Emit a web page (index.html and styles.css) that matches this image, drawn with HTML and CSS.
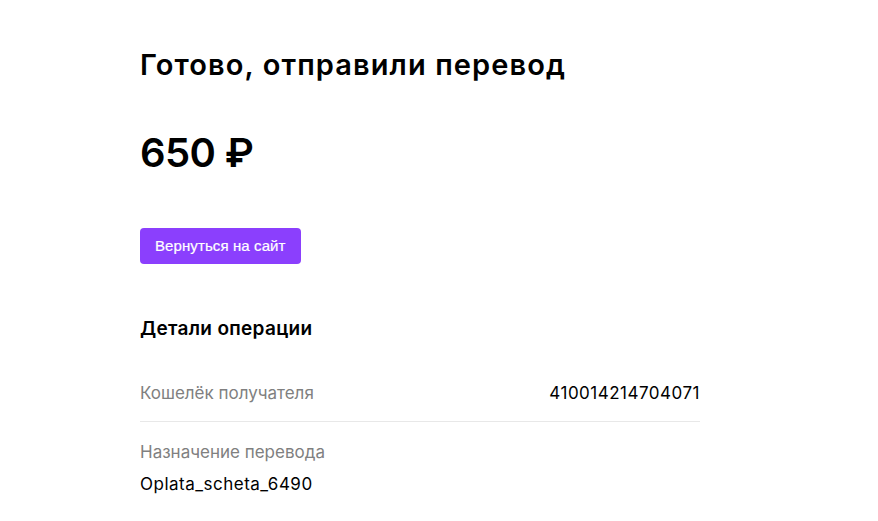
FILE: index.html
```html
<!DOCTYPE html>
<html lang="ru">
<head>
  <meta charset="utf-8">
  <title>Перевод отправлен</title>
  <link rel="stylesheet" href="styles.css">
</head>
<body>
  <div class="page">
    <h1 class="title">Готово, отправили перевод</h1>
    <p class="amount">650 ₽</p>
    <a class="back-btn" href="#">Вернуться на сайт</a>

    <h2 class="details-head">Детали операции</h2>
    <div class="row row-line">
      <span class="label">Кошелёк получателя</span>
      <span class="value">410014214704071</span>
    </div>
    <div class="row-stack">
      <span class="label">Назначение перевода</span>
      <span class="value">Oplata_scheta_6490</span>
    </div>
  </div>
</body>
</html>
```

FILE: styles.css
```css
body {
  margin: 0;
  background: #fff;
  font-family: Inter, "Noto Sans", sans-serif;
  color: #000;
}

.page {
  width: 560px;
  padding: 43px 0 0 140px;
}

.title {
  margin: 0;
  font-size: 29px;
  font-weight: 600;
  line-height: 44px;
  letter-spacing: 1.1px;
}

.amount {
  margin: 44px 0 0;
  font-size: 40px;
  font-weight: 600;
  line-height: 44px;
  letter-spacing: -0.6px;
}

.back-btn {
  display: inline-block;
  margin-top: 53px;
  height: 36px;
  line-height: 36px;
  padding: 0 15px 0 15px;
  border-radius: 4px;
  background: #8b3ffd;
  color: #fff;
  font-family: "Liberation Sans", Arial, sans-serif;
  font-size: 15px;
  letter-spacing: 0.1px;
  text-decoration: none;
  -webkit-text-stroke: 0.2px #fff;
}

.details-head {
  margin: 53px 0 0;
  font-size: 19px;
  font-weight: 600;
  line-height: 24px;
  letter-spacing: 0.3px;
}

.row {
  display: flex;
  justify-content: space-between;
  align-items: center;
  margin-top: 42px;
  padding-bottom: 18px;
  font-size: 17px;
}

.row-line {
  border-bottom: 1px solid #e8e8e8;
}

.row-stack {
  display: flex;
  flex-direction: column;
  gap: 12px;
  padding-top: 20px;
  font-size: 17px;
}

.label {
  color: #808080;
}

.value {
  color: #000;
  letter-spacing: 0.5px;
}
```
